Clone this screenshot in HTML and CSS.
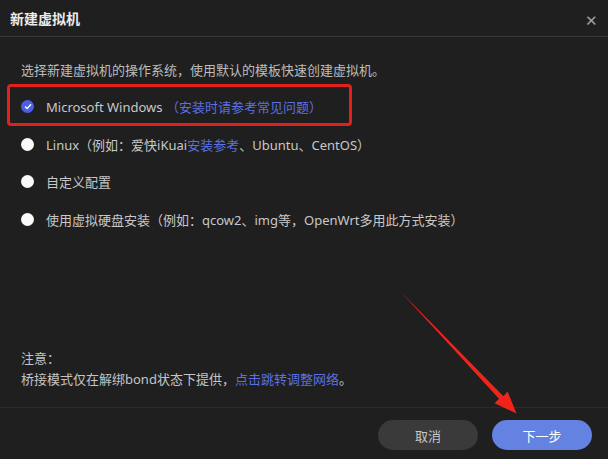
FILE: index.html
```html
<!DOCTYPE html>
<html lang="zh">
<head>
  <meta charset="UTF-8">
  <title>新建虚拟机</title>
  <link rel="stylesheet" href="styles.css">
</head>
<body>
  <div class="dialog">
    <div class="header">
      <span class="title">新建虚拟机</span>
      <span class="close">✕</span>
    </div>

    <div class="content">
      <p class="desc">选择新建虚拟机的操作系统，使用默认的模板快速创建虚拟机。</p>
      <div class="options">
        <label class="option">
          <span class="radio checked">
            <svg width="8" height="7" viewBox="0 0 8 7"><path d="M1 3.6 L3.1 5.6 L7 1.2" fill="none" stroke="#fff" stroke-width="1.4"/></svg>
          </span>
          <span>Microsoft Windows <a class="link">（安装时请参考常见问题）</a></span>
        </label>
        <label class="option">
          <span class="radio"></span>
          <span>Linux（例如：爱快iKuai<a class="link">安装参考</a>、Ubuntu、CentOS）</span>
        </label>
        <label class="option">
          <span class="radio"></span>
          <span>自定义配置</span>
        </label>
        <label class="option">
          <span class="radio"></span>
          <span>使用虚拟硬盘安装（例如：qcow2、img等，OpenWrt多用此方式安装）</span>
        </label>
      </div>

      <div class="notes">
        <div>注意：</div>
        <div>桥接模式仅在解绑bond状态下提供，<a class="link">点击跳转调整网络</a>。</div>
      </div>
    </div>

    <div class="footer">
      <button class="btn cancel">取消</button>
      <button class="btn primary">下一步</button>
    </div>
  </div>

  <!-- annotations -->
  <div class="mark-box"></div>
  <svg class="mark-arrow" width="608" height="459" viewBox="0 0 608 459">
    <polygon points="400,291 503.4,396.2 507.6,391.6 516.5,413.5 494.6,403.2 499,398.8" fill="#f2231b"/>
  </svg>
</body>
</html>
```

FILE: styles.css
```css
body {
  margin: 0;
  background: #1f1f1f;
  font-family: "Noto Sans", "Noto Sans CJK SC", sans-serif;
  font-size: 13px;
  color: #c4c4c4;
}
.dialog {
  height: 100vh;
  display: flex;
  flex-direction: column;
}
.header {
  height: 36px;
  border-bottom: 1px solid #383838;
  display: flex;
  align-items: center;
  justify-content: space-between;
  padding: 0 10px;
}
.title {
  font-size: 14px;
  font-weight: bold;
  color: #ececec;
}
.close {
  font-size: 15px;
  color: #a0a0a0;
  margin-top: 3px;
}
.content {
  flex: 1;
  display: flex;
  flex-direction: column;
  padding: 23px 20px 0 21px;
}
.desc {
  margin: 0;
  line-height: 20px;
  color: #bcbcbc;
}
.options {
  margin-top: 8px;
}
.option {
  display: flex;
  align-items: center;
  height: 37.5px;
  gap: 12px;
  color: #c8c8c8;
}
.radio {
  width: 13px;
  height: 13px;
  border-radius: 50%;
  background: #fafafa;
  display: flex;
  align-items: center;
  justify-content: center;
  flex-shrink: 0;
}
.radio.checked {
  background: #4b5fe6;
}
.link {
  color: #5b70e4;
}
.notes {
  margin-top: auto;
  padding-bottom: 17px;
  line-height: 21px;
  color: #c4c4c4;
}
.footer {
  border-top: 1px solid #2b2b2b;
  display: flex;
  justify-content: flex-end;
  gap: 14px;
  padding: 12px 16px 9px;
}
.btn {
  width: 100px;
  height: 30px;
  border: none;
  border-radius: 15px;
  font-family: inherit;
  font-size: 13px;
}
.cancel {
  background: #3a3a3a;
  color: #c8c8c8;
}
.primary {
  background: #6482e2;
  color: #fff;
}
.mark-box {
  position: absolute;
  left: 7px;
  top: 84px;
  width: 339px;
  height: 36px;
  border: 3px solid #e3201b;
  border-radius: 4px;
}
.mark-arrow {
  position: absolute;
  left: 0;
  top: 0;
}
```
